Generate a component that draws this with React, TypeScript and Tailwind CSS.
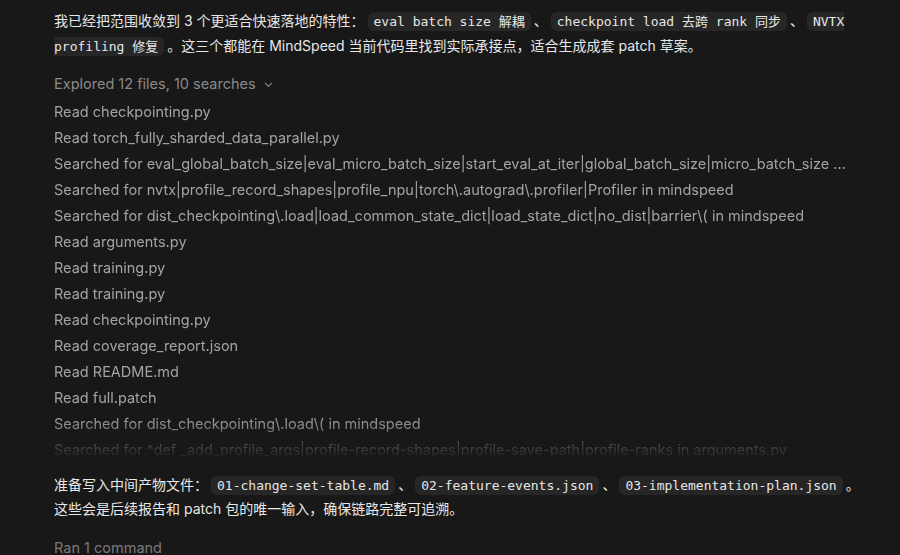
import React from "react";

const sans = "font-['Inter','Noto_Sans_CJK_SC',sans-serif]";

function Code({ children }: { children: React.ReactNode }) {
  return (
    <code className="mx-[3px] rounded-[6px] bg-[#262626] px-[6px] py-[2px] font-['DejaVu_Sans_Mono','Noto_Sans_CJK_SC',monospace] text-[13px] text-[#e6e6e6]">
      {children}
    </code>
  );
}

const rows = [
  "Read checkpointing.py",
  "Read torch_fully_sharded_data_parallel.py",
  "Searched for eval_global_batch_size|eval_micro_batch_size|start_eval_at_iter|global_batch_size|micro_batch_size in mindspeed",
  "Searched for nvtx|profile_record_shapes|profile_npu|torch\\.autograd\\.profiler|Profiler in mindspeed",
  "Searched for dist_checkpointing\\.load|load_common_state_dict|load_state_dict|no_dist|barrier\\( in mindspeed",
  "Read arguments.py",
  "Read training.py",
  "Read training.py",
  "Read checkpointing.py",
  "Read coverage_report.json",
  "Read README.md",
  "Read full.patch",
  "Searched for dist_checkpointing\\.load\\( in mindspeed",
  "Searched for ^def _add_profile_args|profile-record-shapes|profile-save-path|profile-ranks in arguments.py",
];

export default function App() {
  return (
    <div className={`h-[555px] w-[900px] overflow-hidden bg-[#181818] ${sans}`}>
      <div className="pl-[54px] pr-[34px] pt-[9px]">
        <p className="text-[14px] leading-[24px] text-[#e8e8e8]">
          我已经把范围收敛到 3 个更适合快速落地的特性：
          <Code>eval batch size 解耦</Code>、<Code>checkpoint load 去跨 rank 同步</Code>、
          <Code>NVTX profiling 修复</Code>。这三个都能在 MindSpeed 当前代码里找到实际承接点，适合生成成套 patch 草案。
        </p>

        <div className="mt-[13px] flex h-[24px] items-center gap-[7px] text-[14.5px] text-[#8a8a8a]">
          <span>Explored 12 files, 10 searches</span>
          <svg width="11" height="11" viewBox="0 0 12 12" fill="none">
            <path d="M2.5 4.5 6 8l3.5-3.5" stroke="#8a8a8a" strokeWidth="1.2" strokeLinecap="round" strokeLinejoin="round" />
          </svg>
        </div>

        <div className="relative mt-[3px] h-[361px] overflow-hidden pr-[18px] [mask-image:linear-gradient(to_bottom,black_88%,transparent_100%)]">
          {rows.map((r, i) => (
            <div key={i} className="h-[26px] truncate text-[14.5px] leading-[26px] text-[#a3a3a3]">
              {r}
            </div>
          ))}
          <div className="absolute right-[-2px] top-[7px] h-[210px] w-[1px] bg-[#303030]" />
        </div>

        <p className="mt-[13px] text-[14px] leading-[23px] text-[#e8e8e8]">
          准备写入中间产物文件：<Code>01-change-set-table.md</Code>、<Code>02-feature-events.json</Code>、
          <span className="whitespace-nowrap">
            <Code>03-implementation-plan.json</Code>。
          </span>
          <br />
          这些会是后续报告和 patch 包的唯一输入，确保链路完整可追溯。
        </p>

        <div className="mt-[16px] text-[14.5px] leading-[24px] text-[#7a7a7a]">Ran 1 command</div>
      </div>
    </div>
  );
}
